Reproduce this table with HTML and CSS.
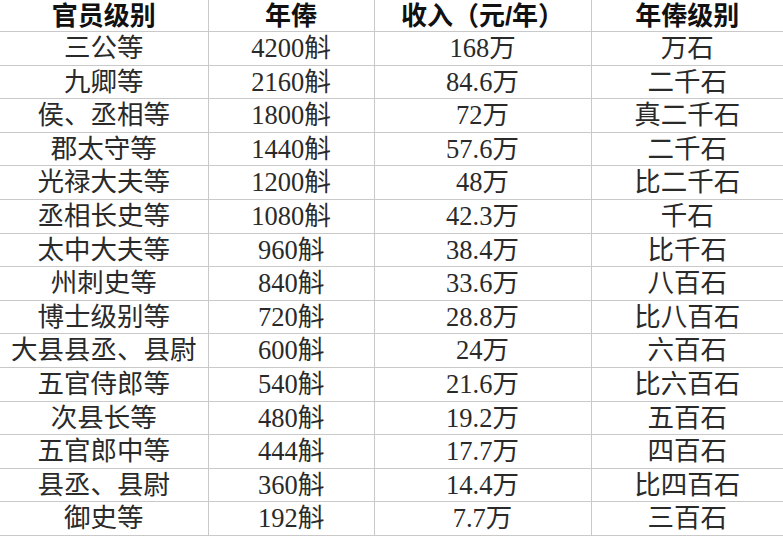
FILE: index.html
```html
<!DOCTYPE html>
<html lang="zh-CN">
<head>
<meta charset="utf-8">
<title>官员级别与年俸</title>
<link rel="stylesheet" href="styles.css">
</head>
<body>
<table class="salary">
  <colgroup>
    <col class="c1"><col class="c2"><col class="c3"><col class="c4">
  </colgroup>
  <thead>
    <tr><th>官员级别</th><th>年俸</th><th>收入（元/年）</th><th>年俸级别</th></tr>
  </thead>
  <tbody>
    <tr><td>三公等</td><td>4200斛</td><td>168万</td><td>万石</td></tr>
    <tr><td>九卿等</td><td>2160斛</td><td>84.6万</td><td>二千石</td></tr>
    <tr><td>侯、丞相等</td><td>1800斛</td><td>72万</td><td>真二千石</td></tr>
    <tr><td>郡太守等</td><td>1440斛</td><td>57.6万</td><td>二千石</td></tr>
    <tr><td>光禄大夫等</td><td>1200斛</td><td>48万</td><td>比二千石</td></tr>
    <tr><td>丞相长史等</td><td>1080斛</td><td>42.3万</td><td>千石</td></tr>
    <tr><td>太中大夫等</td><td>960斛</td><td>38.4万</td><td>比千石</td></tr>
    <tr><td>州刺史等</td><td>840斛</td><td>33.6万</td><td>八百石</td></tr>
    <tr><td>博士级别等</td><td>720斛</td><td>28.8万</td><td>比八百石</td></tr>
    <tr><td>大县县丞、县尉</td><td>600斛</td><td>24万</td><td>六百石</td></tr>
    <tr><td>五官侍郎等</td><td>540斛</td><td>21.6万</td><td>比六百石</td></tr>
    <tr><td>次县长等</td><td>480斛</td><td>19.2万</td><td>五百石</td></tr>
    <tr><td>五官郎中等</td><td>444斛</td><td>17.7万</td><td>四百石</td></tr>
    <tr><td>县丞、县尉</td><td>360斛</td><td>14.4万</td><td>比四百石</td></tr>
    <tr><td>御史等</td><td>192斛</td><td>7.7万</td><td>三百石</td></tr>
  </tbody>
</table>
</body>
</html>
```
FILE: styles.css
```css
html, body {
  margin: 0;
  padding: 0;
  background: #ffffff;
  overflow: hidden;
}

.salary {
  width: 783px;
  table-layout: fixed;
  border-collapse: collapse;
  border-spacing: 0;
  color: #2a2a2a;
}

.c1 { width: 208px; }
.c2 { width: 166px; }
.c3 { width: 217px; }
.c4 { width: 192px; }

.salary th,
.salary td {
  padding: 0;
  text-align: center;
  vertical-align: middle;
  line-height: 1;
  white-space: nowrap;
  border-bottom: 1px solid #c9c9c9;
  border-left: 1px solid #c9c9c9;
}

.salary th:first-child,
.salary td:first-child {
  border-left: none;
}

.salary th {
  height: 31px;
  font-family: "Liberation Sans", "Noto Sans CJK SC", sans-serif;
  font-weight: 700;
  font-size: 26px;
  color: #111111;
}

.salary td {
  height: 32.6px;
  font-family: "Liberation Serif", "Noto Sans CJK SC", serif;
  font-weight: 400;
  font-size: 26.5px;
}
```
